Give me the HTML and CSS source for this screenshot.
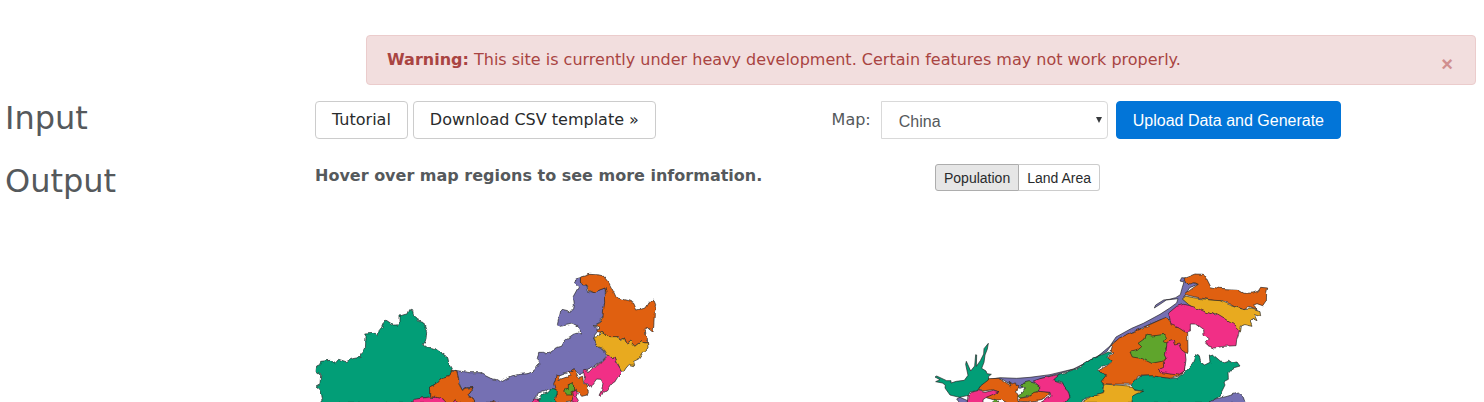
FILE: index.html
```html
<!DOCTYPE html>
<html lang="en">
<head>
<meta charset="utf-8">
<meta name="viewport" content="width=device-width, initial-scale=1">
<title>Cartogram</title>
<link rel="stylesheet" href="styles.css">
</head>
<body>
<main class="page">
  <div class="alert" role="alert">
    <span><strong>Warning:</strong> This site is currently under heavy development. Certain features may not work properly.</span>
    <button class="alert-close" type="button" aria-label="Close">×</button>
  </div>

  <section class="row input-row">
    <h2 class="heading">Input</h2>
    <div class="controls">
      <div class="actions">
        <button class="btn" type="button">Tutorial</button>
        <button class="btn" type="button">Download CSV template »</button>
      </div>
      <form class="map-form">
        <label class="map-label" for="map">Map:</label>
        <div class="select-wrap"><select class="map-select" id="map"><option>China</option></select></div>
        <button class="btn btn-primary" type="button">Upload Data and Generate</button>
      </form>
    </div>
  </section>

  <section class="row output-row">
    <h2 class="heading">Output</h2>
    <div class="pane">
      <p class="hint">Hover over map regions to see more information.</p>
      <svg class="map" viewBox="15 0 1035 411" role="img" aria-label="Map of China by land area">
        <filter id="rough" x="-2%" y="-2%" width="104%" height="104%" color-interpolation-filters="sRGB">
          <feTurbulence type="fractalNoise" baseFrequency="0.07" numOctaves="1" seed="4"/>
          <feDisplacementMap in="SourceGraphic" scale="13" xChannelSelector="R" yChannelSelector="G"/>
        </filter>
        <g filter="url(#rough)">
        <path class="purple" d="M435 316L460 320L480 323L510 323L524 331L542 340L560 344L567 349L574 351L590 342L610 332L632 328L660 325L675 314L683 301L693 292L682 281L686 262L698 262L706 266L724 264L733 249L755 243L764 234L762 224L780 215L790 208L803 204L812 207L811 197L801 185L786 177L769 181L748 184L742 180L752 135L773 140L790 137L793 119L790 94L806 65L793 56L797 42L811 38L812 51L824 58L830 60L835 79L853 82L868 75L886 68L886 148L875 157L872 170L853 181L865 196L850 216L860 244L882 255L891 275L879 288L847 305L821 317L810 330L791 312L777 322L750 332L735 345L735 363L741 370L733 385L720 372L700 380L680 386L678 400L665 415H500L480 400L470 396L459 385L480 384L489 368L470 369L457 376L446 352Z"/>
        <path class="teal" d="M30 415L37 404L34 380L28 371L18 363L30 356L32 331L18 320L20 303L29 299L32 289L61 286L69 295L77 293L86 283L108 290L128 281L151 277L152 266L166 252L168 214L164 207L196 205L205 212L207 197L215 187L221 173L228 165L250 180L264 180L270 170L270 153L282 149L291 147L296 134L308 137L311 151L322 160L326 169L341 174L350 203L348 225L339 240L350 248L380 254L413 277L418 300L427 317L419 334L391 342L377 357L359 366L359 395L330 400L310 408L300 415Z"/>
        <path class="orange" d="M359 395V366L377 357L391 342L419 334L424 316L440 317L446 341V356L457 376L470 369L489 368L480 384L472 391L486 396L496 415H400L390 400Z"/>
        <path class="pink" d="M300 415L313 403L345 398L380 397L400 402L408 415ZM425 415L432 404L447 415Z"/>
        <path class="orange" d="M540 415L550 408L558 415ZM735 415L741 388L735 371L731 357L736 342L738 330L746 332L747 344L768 337L783 333L777 321L791 312L800 326L805 338L818 334L820 350L831 360L835 379L831 390L815 394L802 378L799 373L792 379L790 394L785 411Z"/>
        <path class="orange" d="M812 36L840 28L868 30L880 33L897 54L912 83L919 98L957 108L971 115L980 135L1008 129L1018 112L1030 102L1037 119L1033 148L1031 186L1029 202L1012 188L1003 195L1005 212L1012 220L1013 236L1002 236L991 231L975 244L960 228L950 235L943 219L933 225L926 215L889 219L879 203L863 200L869 186L854 182L874 171L879 156L881 132L884 112L883 91L888 84L885 69L866 76L852 83L838 76L831 60L818 60L811 48Z"/>
        <path class="yellow" d="M860 244L855 225L851 218L867 213L871 201L883 207L890 215H918L929 220L935 227L943 219L950 237L961 228L974 244L991 231L1002 236L1013 237L1014 249L1000 262L986 282L971 289L974 302L958 298L948 309L940 322L930 309L923 295L914 278L905 282L892 272L886 258L877 249Z"/>
        <path class="pink" d="M891 278L897 272L904 281L915 278L921 295L938 322L923 337L914 351L902 358L889 378L878 382L872 394L867 391L875 375L879 354L873 343L860 342L848 358L843 368L834 361L823 350L825 342L820 317L827 313L834 324L849 308L877 291Z"/>
        <path class="teal" d="M680 415L690 397L699 387L718 382L728 370L742 376L741 390L735 403L740 415Z"/>
        <path class="green" d="M764 382L770 370L775 371V357L786 354L791 362L790 375L782 378L786 390H773Z"/>
        <path class="pink" d="M663 415L671 402L686 402L688 415ZM785 415L790 395L788 377L799 373L802 385L798 395L805 406L800 415Z"/>
        </g>
      </svg>
    </div>
    <div class="pane">
      <div class="switch">
        <button class="btn-small active" type="button" aria-pressed="true">Population</button>
        <button class="btn-small" type="button" aria-pressed="false">Land Area</button>
      </div>
      <svg class="map" viewBox="15 0 1035 411" role="img" aria-label="Cartogram of China by population">
        <filter id="ripple" x="-2%" y="-2%" width="104%" height="104%" color-interpolation-filters="sRGB">
          <feTurbulence type="fractalNoise" baseFrequency="0.05" numOctaves="1" seed="7"/>
          <feDisplacementMap in="SourceGraphic" scale="12" xChannelSelector="R" yChannelSelector="G"/>
        </filter>
        <path class="purple" d="M90 397L120 410L90 415L80 402ZM170 345L210 338L260 340L300 337L360 329L430 312L500 277L540 243L558 216L605 190L640 175L690 148L718 130L740 114L744 101L709 105L690 118L673 129L677 120L701 105L718 103L737 98L751 89L757 67L762 51L750 48L755 38L767 39L774 50L790 53L805 57L779 68L765 91L768 98L790 117L805 125L760 140L720 164L690 165L650 182L580 218L550 232L530 260L480 285L440 310L390 325L330 342L310 355L270 370L245 360L215 342Z"/>
        <g filter="url(#ripple)">
        <path class="orange" d="M142 376L160 353L175 341L205 340L219 347L234 357L243 363L237 352L248 360L256 352L259 362L270 358L265 374L255 380L264 388L263 403L270 415H235L215 405L190 404L169 398L176 388L205 381L190 374L160 378Z"/>
        <path class="pink" d="M115 415L117 389L125 382L143 377L165 382L190 376L207 380L185 390L169 397L159 404V415Z"/>
        <path class="green" d="M264 393L279 382L284 372L275 362L281 354L297 350L312 354L329 363L327 377L315 383L300 392L270 400ZM180 415L194 403L208 415Z"/>
        <path class="orange" d="M268 400L294 396L312 382L340 379L362 383L354 395L330 404L295 410L265 409Z"/>
        <path class="pink" d="M310 348L330 341L370 332L392 328L375 346L402 356L408 370L418 380L420 402L408 415H330L363 394L360 382L325 379L330 365Z"/>
        <path class="teal" d="M371 344L390 328L440 311L480 286L535 261L546 264L530 277L545 289L529 300L515 304L502 315L515 326L530 330L515 349L523 365L520 383L491 390L455 406L450 415H405L420 397L414 376L403 364L397 351Z"/>
        <path class="orange" d="M504 318L531 302L546 290L533 278L552 264L540 257L545 240L568 219L650 183L703 159L720 168L737 185L755 188L773 199L774 262L765 260L763 318L746 333L720 340L662 334L625 333L608 358L521 357L514 349L530 329L511 325Z"/>
        <path class="green" d="M600 261L622 256L635 245L624 235L642 222L645 210L669 213L702 208L710 217L703 230L714 236L707 247L712 263L711 280L700 288L665 295L637 281L607 276Z"/>
        <path class="orange" d="M764 88L778 77L790 68L805 58L795 53L780 57L768 52L762 40L795 27L820 28L831 43L842 65L865 70L922 73L942 85L969 84L985 78L992 67L1013 69L1010 83L1009 106L998 122L981 116L969 121L982 136L957 127L945 134L918 126L905 119L882 109L855 107L812 99L783 93Z"/>
        <path class="yellow" d="M757 102L767 93L790 98L842 105L870 107L898 119L920 127L943 134L965 132L990 140L992 155L973 149L981 167L966 160L961 171L966 184L944 179L934 183L932 198L915 188L896 169L865 152L800 136L775 118Z"/>
        <path class="pink" d="M716 144L740 124L760 118L790 125L820 138L846 147L852 153L863 147L883 159L908 174L928 192L926 205L920 224L918 242L882 244L851 249L834 242L826 233L838 222L822 208L821 195L796 177L781 177L781 198L765 201L747 189L723 179Z"/>
        <path class="pink" d="M697 323L688 313L701 307L700 294L712 281L706 270L711 232L729 226L734 240L746 237L754 254L766 263L768 281L763 318L745 330L720 327Z"/>
        <path class="teal" d="M582 415L608 402L610 384L640 379L612 374L606 359L614 348L630 335L665 332L721 341L742 339L767 320L788 297L796 266L807 271L812 292L824 300L840 292L838 273L850 270L871 288L884 290L896 286L906 293L921 291L930 303L909 309L894 326L895 343L881 350L885 360L876 378L867 395L850 405L846 415Z"/>
        <path class="yellow" d="M450 415L490 390L521 382L524 366L519 357L561 360L608 364L614 376L640 379L620 386L608 393L606 415Z"/>
        <path class="purple" d="M840 415L855 402L888 395L925 384L940 397L946 415Z"/>
        </g>
        <path class="teal" d="M88 397L60 390L45 369L46 360L37 354L17 350L30 344L15 336L20 333L50 347H63L63 354L79 349L103 346L114 331L107 298L109 289L122 318L134 303L137 269L140 270L139 304L151 287L161 267L162 251L175 235L172 252L165 270L162 292L155 310L168 318L171 326L184 328L176 334L175 345L151 363L143 376L120 381L115 391Z"/>
      </svg>
    </div>
  </section>
</main>
</body>
</html>
```
FILE: styles.css
```css
* { box-sizing: border-box; }

body {
  margin: 0;
  overflow: hidden;
  background: #fff;
  color: #55595c;
  font: 16px/24px "DejaVu Sans", sans-serif;
}

.page { padding: 35px 8px 0 5px; }

.alert {
  display: flex;
  align-items: center;
  justify-content: space-between;
  margin: 0 0 16px 361px;
  padding: 12px 20px;
  border: 1px solid #ebcccc;
  border-radius: 4px;
  background: #f2dede;
  color: #a94442;
}

.alert-close {
  margin: 8px 0 0;
  padding: 0 2px;
  border: 0;
  background: none;
  color: #d08f8f;
  font: bold 20px/16px "Liberation Sans", sans-serif;
}

.row {
  display: grid;
  grid-template-columns: 310fr 620fr 541fr;
}

.heading {
  margin: 0;
  font-size: 32px;
  line-height: 35px;
  font-weight: 400;
}

.input-row { margin-bottom: 25px; }

.controls {
  grid-column: 2 / 4;
  display: flex;
  justify-content: space-between;
  padding-right: 135px;
}

.actions { display: flex; gap: 5px; }

.map-form { display: flex; }

.btn {
  height: 38px;
  padding: 0 16px;
  border: 1px solid #ccc;
  border-radius: 4px;
  background: #fff;
  color: #292b2c;
  font: 16px/20px "DejaVu Sans", sans-serif;
}

.btn-primary {
  border-color: #0275d8;
  background: #0275d8;
  color: #fff;
  padding-top: 2px;
  font-family: "Liberation Sans", sans-serif;
}

.map-label { padding: 7px 10px 0 0; }

.select-wrap {
  position: relative;
  margin-right: 8px;
}

.select-wrap::after {
  content: "";
  position: absolute;
  top: 16px;
  right: 6px;
  border: 3px solid transparent;
  border-top: 6px solid #373a3c;
  border-bottom: 0;
  pointer-events: none;
}

.map-select {
  appearance: none;
  width: 227px;
  height: 38px;
  padding: 4px 12px 0 17px;
  border: 1px solid #d9d9d9;
  border-radius: 0 4px 4px 0;
  background: #fff;
  color: #55595c;
  font: 16px/24px "Liberation Sans", sans-serif;
}

.hint {
  height: 27px;
  margin: 0;
  font-weight: 700;
}

.switch { display: flex; }

.btn-small {
  height: 27px;
  padding: 2px 8px 0;
  border: 1px solid #ccc;
  border-left: 0;
  border-radius: 0 3px 3px 0;
  background: #fff;
  color: #292b2c;
  font: 14px/21px "Liberation Sans", sans-serif;
}

.btn-small.active {
  border: 1px solid #adadad;
  border-radius: 3px 0 0 3px;
  background: #e6e6e6;
}

.map {
  display: block;
  width: 345px;
  height: 137px;
  margin-top: 74px;
}

.map path {
  stroke: #222;
  stroke-width: 2;
  stroke-linejoin: round;
}

.teal { fill: #029e77; }
.orange { fill: #e06010; }
.purple { fill: #7570b3; }
.pink { fill: #f12f86; }
.green { fill: #5fa52c; }
.yellow { fill: #e8aa1f; }
```
